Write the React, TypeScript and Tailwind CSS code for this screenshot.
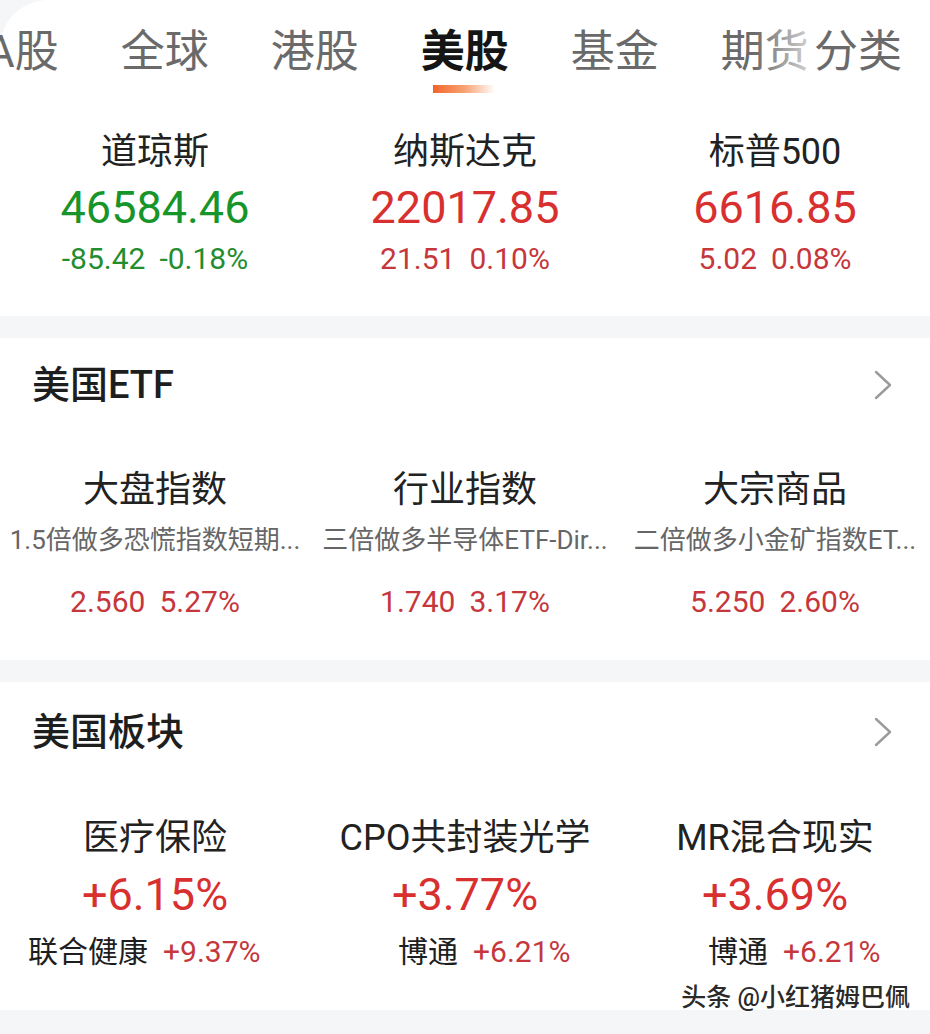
import * as React from 'react';

const font = { fontFamily: 'Roboto, "Noto Sans CJK SC", sans-serif' };

const tabs = ['A股', '全球', '港股', '美股', '基金', '期货'];

const indices = [
  { name: '道琼斯', value: '46584.46', change: '-85.42', pct: '-0.18%', up: false },
  { name: '纳斯达克', value: '22017.85', change: '21.51', pct: '0.10%', up: true },
  { name: '标普500', value: '6616.85', change: '5.02', pct: '0.08%', up: true },
];

const etfs = [
  { name: '大盘指数', sub: '1.5倍做多恐慌指数短期...', price: '2.560', pct: '5.27%' },
  { name: '行业指数', sub: '三倍做多半导体ETF-Dir...', price: '1.740', pct: '3.17%' },
  { name: '大宗商品', sub: '二倍做多小金矿指数ET...', price: '5.250', pct: '2.60%' },
];

const sectors = [
  { name: '医疗保险', pct: '+6.15%', stock: '联合健康', stockPct: '+9.37%' },
  { name: 'CPO共封装光学', pct: '+3.77%', stock: '博通', stockPct: '+6.21%' },
  { name: 'MR混合现实', pct: '+3.69%', stock: '博通', stockPct: '+6.21%' },
];

function Chevron() {
  return (
    <svg width="18" height="30" viewBox="0 0 18 30" fill="none">
      <polyline points="2,2 16,15 2,28" stroke="#9b9b9b" strokeWidth="2.4" strokeLinecap="round" strokeLinejoin="round" />
    </svg>
  );
}

function SectionHeader({ title, height }: { title: string; height: string }) {
  return (
    <div className={`flex items-center justify-between pl-[32px] pr-[38px] ${height}`}>
      <h2 className="text-[38px] leading-[44px] font-medium text-[#1e1e1e]">{title}</h2>
      <Chevron />
    </div>
  );
}

export default function App() {
  return (
    <div className="relative h-[1034px] w-[930px] overflow-hidden bg-[#f5f6f8]" style={font}>
      {/* Top market tabs + indices */}
      <div className="bg-white rounded-t-[48px] h-[316px]">
        <div className="relative h-[104px] flex items-center overflow-hidden">
          <div className="flex items-center gap-[62px] ml-[-14px]">
            {tabs.map((t) => (
              <div key={t} className="relative">
                <span
                  className={`block text-[44px] leading-[52px] whitespace-nowrap ${
                    t === '美股' ? 'font-bold text-[#151515]' : 'text-[#6a6a6a]'
                  }`}
                >
                  {t}
                </span>
                {t === '美股' && (
                  <span className="absolute left-[12px] top-[59px] h-[8px] w-[62px] bg-linear-to-r from-[#f26424] via-[#f7a070] to-white/0" />
                )}
              </div>
            ))}
          </div>
          <div className="absolute right-0 top-0 h-full flex items-center pl-[60px] pr-[28px] bg-linear-to-r from-white/0 via-white via-45% to-white">
            <span className="text-[44px] leading-[52px] text-[#6a6a6a]">分类</span>
          </div>
        </div>

        <div className="grid grid-cols-3 pt-[26px]">
          {indices.map((i) => (
            <div key={i.name} className="flex flex-col items-center">
              <div className="h-[44px] text-[36px] leading-[44px] text-[#222]">{i.name}</div>
              <div
                className={`mt-[9px] h-[50px] text-[45px] leading-[50px] ${
                  i.up ? 'text-[#d8302f]' : 'text-[#17952a]'
                }`}
              >
                {i.value}
              </div>
              <div
                className={`mt-[9px] h-[34px] text-[30px] leading-[34px] flex gap-[14px] ${
                  i.up ? 'text-[#c5373c]' : 'text-[#238d2f]'
                }`}
              >
                <span>{i.change}</span>
                <span>{i.pct}</span>
              </div>
            </div>
          ))}
        </div>
      </div>

      {/* US ETF */}
      <div className="bg-white mt-[22px] h-[322px]">
        <SectionHeader title="美国ETF" height="h-[94px]" />
        <div className="grid grid-cols-3">
          {etfs.map((e) => (
            <div key={e.name} className="flex flex-col items-center">
              <div className="mt-[36px] h-[44px] text-[36px] leading-[44px] text-[#222]">{e.name}</div>
              <div className="mt-[11px] h-[34px] text-[26px] leading-[34px] text-[#666] whitespace-nowrap">{e.sub}</div>
              <div className="mt-[28px] h-[34px] text-[30px] leading-[34px] text-[#c5373c] flex gap-[14px]">
                <span>{e.price}</span>
                <span>{e.pct}</span>
              </div>
            </div>
          ))}
        </div>
      </div>

      {/* US sectors */}
      <div className="bg-white mt-[22px] h-[328px]">
        <SectionHeader title="美国板块" height="h-[100px]" />
        <div className="grid grid-cols-3">
          {sectors.map((s, idx) => (
            <div key={idx} className="flex flex-col">
              <div className="mt-[34px] h-[44px] text-[36px] leading-[44px] text-[#222] whitespace-nowrap text-center">{s.name}</div>
              <div className="mt-[9px] h-[52px] text-[45px] leading-[52px] text-[#d8302f] text-center">{s.pct}</div>
              <div className="mt-[13px] h-[36px] flex items-center whitespace-nowrap">
                <span className="w-[148px] text-right text-[30px] leading-[36px] text-[#1e1e1e]">{s.stock}</span>
                <span className="ml-[15px] text-[30px] leading-[36px] text-[#c5373c]">{s.stockPct}</span>
              </div>
            </div>
          ))}
        </div>
      </div>

      {/* watermark */}
      <div className="absolute right-[20px] bottom-[22px] text-[25px] leading-[28px] font-medium text-[#2a2a2a] [text-shadow:0_0_2px_#fff,0_0_3px_#fff]">
        头条 @小红猪姆巴佩
      </div>
    </div>
  );
}
